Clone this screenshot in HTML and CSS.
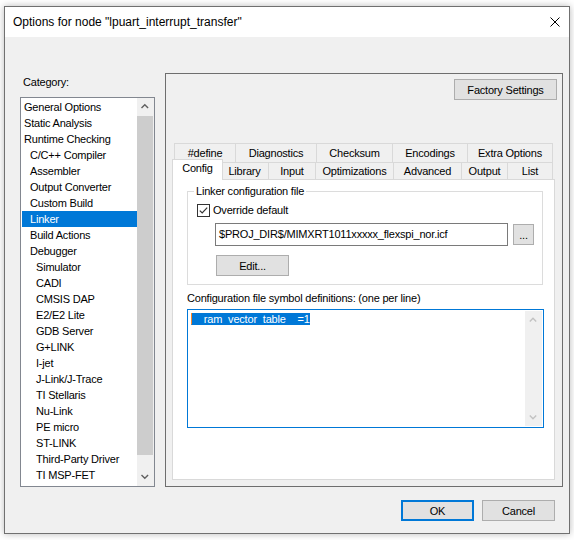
FILE: index.html
```html
<!DOCTYPE html>
<html lang="en">
<head>
  <meta charset="UTF-8" />
  <title>Options for node</title>
  <link rel="stylesheet" href="styles.css">
</head>
<body>

<div class="dialog">
  <div class="titlebar">
    <span class="title">Options for node "lpuart_interrupt_transfer"</span>
    <svg class="close" width="10" height="10" viewBox="0 0 10 10">
      <path d="M0.5 0.5L9.5 9.5M9.5 0.5L0.5 9.5" stroke="#000" stroke-width="1" fill="none"/>
    </svg>
  </div>

  <div class="dialog-body">
    <div class="main">

      <!-- left: category list -->
      <div class="category">
        <div class="label">Category:</div>
        <div class="listbox">
          <ul class="items">
            <li>General Options</li>
            <li>Static Analysis</li>
            <li>Runtime Checking</li>
            <li class="l1">C/C++ Compiler</li>
            <li class="l1">Assembler</li>
            <li class="l1">Output Converter</li>
            <li class="l1">Custom Build</li>
            <li class="l1 selected">Linker</li>
            <li class="l1">Build Actions</li>
            <li class="l1">Debugger</li>
            <li class="l2">Simulator</li>
            <li class="l2">CADI</li>
            <li class="l2">CMSIS DAP</li>
            <li class="l2">E2/E2 Lite</li>
            <li class="l2">GDB Server</li>
            <li class="l2">G+LINK</li>
            <li class="l2">I-jet</li>
            <li class="l2">J-Link/J-Trace</li>
            <li class="l2">TI Stellaris</li>
            <li class="l2">Nu-Link</li>
            <li class="l2">PE micro</li>
            <li class="l2">ST-LINK</li>
            <li class="l2">Third-Party Driver</li>
            <li class="l2">TI MSP-FET</li>
          </ul>
          <div class="vscroll">
            <div class="arrow">
              <svg width="17" height="17" viewBox="0 0 17 17"><path d="M4.5 10L7.8 6.7L11.1 10" stroke="#606060" stroke-width="1.4" fill="none"/></svg>
            </div>
            <div class="thumb"></div>
            <div class="track"></div>
            <div class="arrow">
              <svg width="17" height="17" viewBox="0 0 17 17"><path d="M4.5 6L7.8 9.3L11.1 6" stroke="#606060" stroke-width="1.4" fill="none"/></svg>
            </div>
          </div>
        </div>
      </div>

      <!-- right: options frame -->
      <div class="frame">
        <div class="frame-top">
          <button class="btn factory">Factory Settings</button>
        </div>

        <div class="tabctl">
          <div class="tab-row back">
            <div class="tab">#define</div>
            <div class="tab">Diagnostics</div>
            <div class="tab">Checksum</div>
            <div class="tab">Encodings</div>
            <div class="tab">Extra Options</div>
          </div>
          <div class="tab-row front">
            <div class="tab active">Config</div>
            <div class="tab">Library</div>
            <div class="tab">Input</div>
            <div class="tab">Optimizations</div>
            <div class="tab">Advanced</div>
            <div class="tab">Output</div>
            <div class="tab">List</div>
          </div>

          <div class="tab-page">
            <fieldset class="group">
              <legend>Linker configuration file</legend>
              <div class="check-row">
                <span class="checkbox">
                  <svg width="11" height="11" viewBox="0 0 11 11"><path d="M1.8 5.6L4.2 8L9.2 2.6" stroke="#333" stroke-width="1.2" fill="none"/></svg>
                </span>
                <span class="check-label">Override default</span>
              </div>
              <div class="path-row">
                <div class="edit path">$PROJ_DIR$/MIMXRT1011xxxxx_flexspi_nor.icf</div>
                <button class="btn browse">...</button>
              </div>
              <button class="btn edit-btn">Edit...</button>
            </fieldset>

            <div class="defs-label">Configuration file symbol definitions: (one per line)</div>
            <div class="memo">
              <div class="memo-text"><span class="sel">__ram_vector_table__=1</span></div>
              <div class="tscroll">
                <div class="arrow">
                  <svg width="17" height="17" viewBox="0 0 17 17"><path d="M4.8 10.5L8 7.3L11.2 10.5" stroke="#c2c2c2" stroke-width="1.4" fill="none"/></svg>
                </div>
                <div class="arrow">
                  <svg width="17" height="17" viewBox="0 0 17 17"><path d="M4.8 6.5L8 9.7L11.2 6.5" stroke="#c2c2c2" stroke-width="1.4" fill="none"/></svg>
                </div>
              </div>
            </div>
          </div>
        </div>
      </div>

    </div>

    <div class="buttons">
      <button class="btn default">OK</button>
      <button class="btn">Cancel</button>
    </div>
  </div>
</div>

</body>
</html>
```

FILE: styles.css
```css
* {
  box-sizing: border-box;
}

html, body {
  margin: 0;
  height: 100%;
}

body {
  background: #fff;
  font-family: "Liberation Sans", Arial, sans-serif;
  font-size: 11px;
  letter-spacing: -0.2px;
  color: #000;
  overflow: hidden;
}

.dialog {
  width: 566px;
  height: 528px;
  margin: 6px 0 0 4px;
  border: 1px solid #707070;
  background: #f0f0f0;
  box-shadow: 0 0 7px rgba(0,0,0,0.28);
  display: flex;
  flex-direction: column;
}

.titlebar {
  height: 30px;
  flex: none;
  background: #fff;
  display: flex;
  align-items: center;
  justify-content: space-between;
  padding: 0 9px 0 8px;
}

.title {
  font-family: "Liberation Sans", Arial, sans-serif;
  font-size: 12px;
  letter-spacing: 0;
}

.main {
  display: flex;
  align-items: flex-start;
  gap: 10px;
  padding: 36px 6px 0 15px;
}

/* category list */
.category {
  width: 135px;
  flex: none;
}

.category .label {
  margin: 3px 0 8px 3px;
  line-height: 13px;
}

.listbox {
  height: 390px;
  border: 1px solid #828790;
  background: #fff;
  display: flex;
}

.items {
  flex: 1;
  list-style: none;
  margin: 0;
  padding: 1px 0 0 0;
}

.items li {
  height: 16px;
  line-height: 16px;
  margin-left: 1px;
  padding-left: 2px;
  white-space: nowrap;
}

.items li.l1 {
  padding-left: 8px;
}

.items li.l2 {
  padding-left: 14px;
}

.items li.selected {
  background: #0078d7;
  color: #fff;
}

.vscroll {
  width: 17px;
  background: #f0f0f0;
  display: flex;
  flex-direction: column;
}

.arrow {
  height: 17px;
  flex: none;
}

.arrow svg {
  display: block;
}

.thumb {
  height: 339px;
  margin: 1px 1px 0 0;
  background: #cdcdcd;
}

.track {
  flex: 1;
}

/* options frame */
.frame {
  flex: 1;
  height: 414px;
  border: 1px solid #6e6e6e;
  padding: 5px 0 6px 0;
}

.frame-top {
  display: flex;
  justify-content: flex-end;
  padding-right: 5px;
}

.btn {
  font: inherit;
  letter-spacing: inherit;
  color: #000;
  background: #e1e1e1;
  border: 1px solid #adadad;
  padding: 0;
  height: 21px;
  width: 73px;
}

.btn.factory {
  width: 103px;
}

.btn.default {
  border: 2px solid #0078d7;
}

.tabctl {
  margin: 43px 7px 0 6px;
}

.tab-row {
  display: grid;
  margin: 0 2px;
}

.tab-row.back {
  grid-template-columns: 62px 81px 76px 75px 85px;
  height: 19px;
}

.tab-row.front {
  grid-template-columns: 47px 48px 47px 78px 68px 46px 45px;
  height: 17px;
}

.tab {
  border-top: 1px solid #d9d9d9;
  border-right: 1px solid #d9d9d9;
  background: #f0f0f0;
  text-align: center;
  white-space: nowrap;
}

.tab:first-child {
  border-left: 1px solid #d9d9d9;
}

.back .tab {
  line-height: 18px;
}

.front .tab {
  line-height: 16px;
}

.front .tab.active {
  margin: -3px -2px -1px -2px;
  background: #fff;
  line-height: 17px;
  position: relative;
  z-index: 1;
}

.tab-page {
  height: 301px;
  border: 1px solid #d9d9d9;
  background: #fff;
  padding: 5px 10px 0 14px;
}

.group {
  margin: 0 1px 0 0;
  padding: 6px 8px 8px 9px;
  border: 1px solid #dcdcdc;
}

.group legend {
  padding: 0 2px;
  margin-left: -3px;
  line-height: 13px;
}

.check-row {
  display: flex;
  align-items: center;
  height: 13px;
}

.checkbox {
  width: 13px;
  height: 13px;
  border: 1px solid #333;
  background: #fff;
}

.checkbox svg {
  display: block;
}

.check-label {
  margin-left: 3px;
  line-height: 13px;
}

.path-row {
  display: flex;
  align-items: center;
  margin: 6px 0 0 18px;
}

.edit {
  border: 1px solid #7a7a7a;
  background: #fff;
}

.path {
  width: 293px;
  height: 23px;
  line-height: 21px;
  padding-left: 3px;
  white-space: nowrap;
}

.btn.browse {
  width: 21px;
  margin-left: 5px;
}

.btn.edit-btn {
  display: block;
  margin: 9px 0 0 19px;
}

.defs-label {
  margin-top: 7px;
  line-height: 13px;
}

.memo {
  margin-top: 4px;
  height: 119px;
  border: 1px solid #0078d7;
  background: #fff;
  padding: 1px;
  display: flex;
}

.memo-text {
  flex: 1;
  padding: 2px 0 0 2px;
}

.sel {
  display: inline-block;
  vertical-align: top;
  height: 12px;
  line-height: 12px;
  overflow: hidden;
  background: #0078d7;
  color: #fff;
  border-left: 1px solid #ff8728;
  border-bottom: 1px solid #0078d7;
}

.tscroll {
  width: 17px;
  background: #f0f0f0;
  display: flex;
  flex-direction: column;
  justify-content: space-between;
}

/* bottom buttons */
.buttons {
  display: flex;
  justify-content: flex-end;
  gap: 8px;
  margin-top: 13px;
  padding-right: 14px;
}
```
